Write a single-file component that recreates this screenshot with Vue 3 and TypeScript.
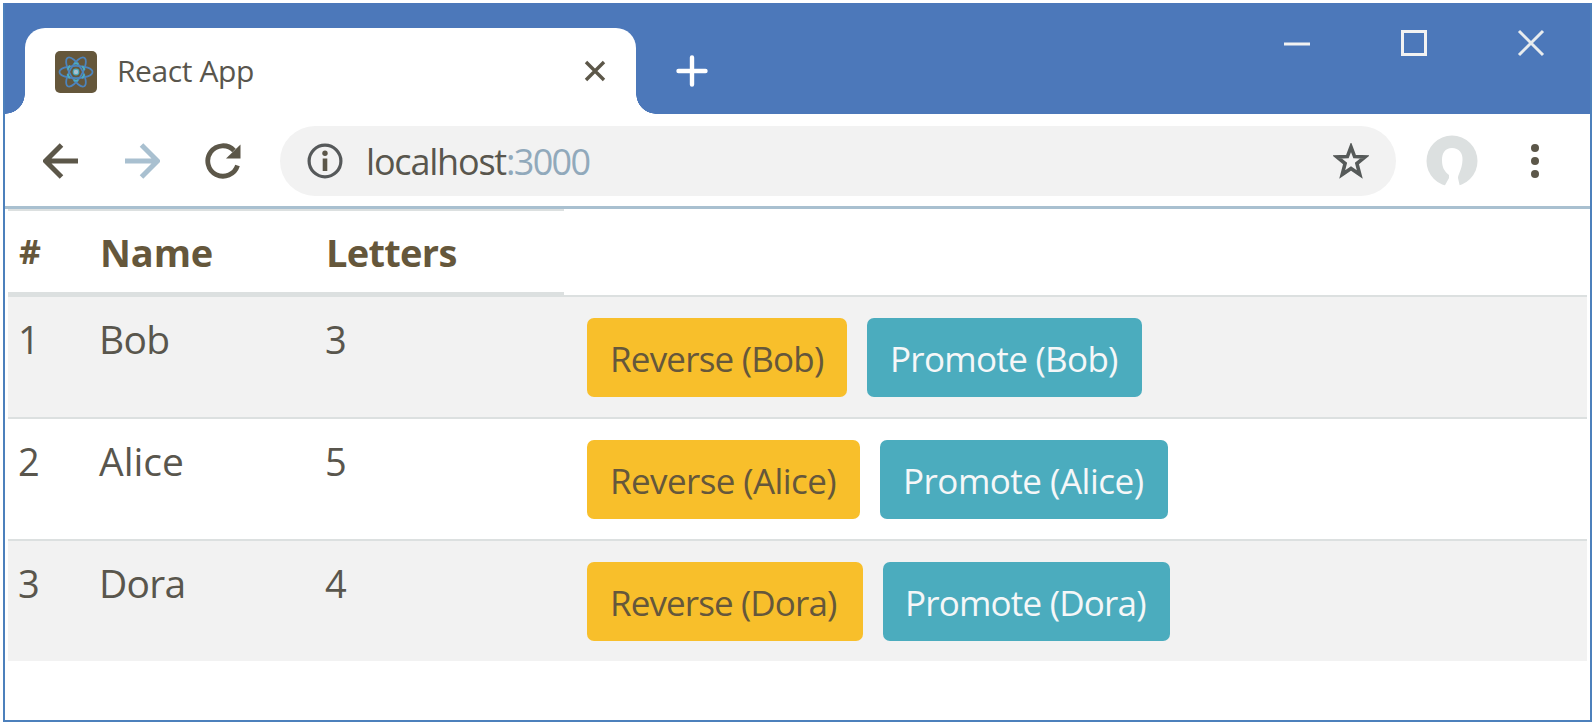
<script setup lang="ts">
interface Row {
  id: number
  name: string
}

const rows: Row[] = [
  { id: 1, name: 'Bob' },
  { id: 2, name: 'Alice' },
  { id: 3, name: 'Dora' },
]
</script>

<template>
  <div class="window">
    <header class="titlebar">
      <div class="tab">
        <svg class="favicon" viewBox="0 0 42 42">
          <rect width="42" height="42" rx="5" fill="#65573b" />
          <g fill="none" stroke="#4c84bd" stroke-width="1.8">
            <ellipse cx="21" cy="21" rx="16.5" ry="6.2" />
            <ellipse cx="21" cy="21" rx="16.5" ry="6.2" transform="rotate(60 21 21)" />
            <ellipse cx="21" cy="21" rx="16.5" ry="6.2" transform="rotate(120 21 21)" />
          </g>
          <circle cx="21" cy="21" r="8.6" fill="none" stroke="#4bacbe" stroke-width="2" stroke-dasharray="4.5 4.505" stroke-dashoffset="-2.25" />
          <circle cx="21" cy="21" r="2.8" fill="#a9c0d0" stroke="#4bacbe" stroke-width="1.2" />
        </svg>
        <span class="tab-title">React App</span>
        <svg class="tab-close" viewBox="0 0 22 22">
          <path d="M2 2L20 20M20 2L2 20" stroke="#5c5749" stroke-width="3.4" />
        </svg>
      </div>
      <svg class="new-tab" viewBox="0 0 32 32">
        <path d="M16 2.5V29.5M2.5 16H29.5" stroke="#fff" stroke-width="4.4" stroke-linecap="round" />
      </svg>
      <div class="controls">
        <svg viewBox="0 0 28 28"><path d="M1 15H27" stroke="#f2f2f2" stroke-width="3" /></svg>
        <svg viewBox="0 0 28 28"><rect x="2.5" y="2.5" width="23" height="23" fill="none" stroke="#f2f2f2" stroke-width="3" /></svg>
        <svg viewBox="0 0 28 28"><path d="M2 2L26 26M26 2L2 26" stroke="#e8ecee" stroke-width="3" /></svg>
      </div>
    </header>

    <nav class="toolbar">
      <svg class="nav-icon back" viewBox="0 0 36 36">
        <path d="M35 18H4M18.5 2L2.5 18L18.5 34" fill="none" stroke="#5c5749" stroke-width="5" />
      </svg>
      <svg class="nav-icon forward" viewBox="0 0 36 36">
        <path d="M1 18H32M17.5 2L33.5 18L17.5 34" fill="none" stroke="#a9c0d0" stroke-width="5" />
      </svg>
      <svg class="nav-icon reload" viewBox="0 0 36 36">
        <path d="M32.5 22.5A15.2 15.2 0 1 1 29 7.5" fill="none" stroke="#5c5749" stroke-width="4.8" />
        <path d="M35.5 1.5V15.5H21Z" fill="#5c5749" />
      </svg>
      <div class="address">
        <svg class="info" viewBox="0 0 36 36">
          <circle cx="18" cy="18" r="15.9" fill="none" stroke="#56595a" stroke-width="3.2" />
          <circle cx="18" cy="10.3" r="2.7" fill="#5c5749" />
          <path d="M18 15.5V28" stroke="#5c5749" stroke-width="4.6" />
        </svg>
        <span class="url"><span class="host">localhost</span><span class="port">:3000</span></span>
        <svg class="star" viewBox="0 0 36 36">
          <path d="M18 4L21.6 13.6L32 14L23.9 20.5L26.8 31.5L18 25.5L9.2 31.5L12.1 20.5L4 14L14.4 13.6Z" fill="none" stroke="#565a59" stroke-width="3.6" />
        </svg>
      </div>
      <svg class="avatar" viewBox="0 0 52 52">
        <circle cx="26" cy="26" r="25.5" fill="#dce0e0" />
        <path d="M26 13C19 13 16 18 16 25C16 32 18 36 23 40V43L18 52H34L32 43C32 39 36 35 36.5 25C37 18 33 13 26 13Z" fill="#fff" />
      </svg>
      <svg class="menu" viewBox="0 0 10 36">
        <circle cx="5" cy="5" r="4" fill="#5c5749" />
        <circle cx="5" cy="18" r="4" fill="#5c5749" />
        <circle cx="5" cy="31" r="4" fill="#5c5749" />
      </svg>
    </nav>

    <main class="page">
      <table>
        <colgroup>
          <col class="c-id"><col class="c-name"><col class="c-len"><col>
        </colgroup>
        <thead>
          <tr><th class="hash">#</th><th class="name">Name</th><th>Letters</th></tr>
        </thead>
        <tbody>
          <tr v-for="row in rows" :key="row.id" :class="row.name.toLowerCase()">
            <td class="number">{{ row.id }}</td>
            <td class="person">{{ row.name }}</td>
            <td class="number">{{ row.name.length }}</td>
            <td>
              <div class="actions">
                <button class="reverse">Reverse ({{ row.name }})</button>
                <button class="promote">Promote ({{ row.name }})</button>
              </div>
            </td>
          </tr>
        </tbody>
      </table>
    </main>
  </div>
</template>

<style>
body {
  margin: 0;
  background: #fff;
  overflow: hidden;
}
</style>

<style scoped>
.window {
  box-sizing: border-box;
  width: 1589px;
  height: 719px;
  margin: 3px;
  border: 2px solid #4c80bc;
  border-top: 0;
  background: #fff;
  color: #59564d;
  font-family: "Open Sans", "Noto Sans", sans-serif;
}
svg {
  display: block;
  flex: none;
}
.titlebar {
  display: flex;
  height: 111px;
  background: #4c78ba;
}
.tab {
  position: relative;
  display: flex;
  align-items: center;
  box-sizing: border-box;
  width: 611px;
  height: 86px;
  margin: 25px 0 0 20px;
  padding: 0 30px;
  border-radius: 20px 20px 0 0;
  background: #fff;
}
.tab::before,
.tab::after {
  content: "";
  position: absolute;
  bottom: 0;
  width: 20px;
  height: 20px;
}
.tab::before {
  left: -20px;
  background: radial-gradient(circle at 0 0, transparent 19.5px, #fff 20px);
}
.tab::after {
  right: -20px;
  background: radial-gradient(circle at 100% 0, transparent 19.5px, #fff 20px);
}
.favicon {
  width: 42px;
  height: 42px;
  margin-top: 1px;
}
.tab-title {
  margin-left: 20px;
  font-size: 30px;
  line-height: 40px;
  letter-spacing: -0.4px;
}
.tab-close {
  width: 22px;
  height: 22px;
  margin-left: auto;
}
.new-tab {
  width: 32px;
  height: 32px;
  margin: 52px 0 0 40px;
}
.controls {
  display: flex;
  gap: 89px;
  margin: 26px 45px 0 auto;
}
.controls svg {
  width: 28px;
  height: 28px;
}
.toolbar {
  display: flex;
  align-items: center;
  box-sizing: border-box;
  height: 95px;
  padding: 1px 50px 0 38px;
  border-bottom: 3px solid #a9c0d0;
}
.nav-icon {
  width: 36px;
  height: 36px;
}
.forward,
.reload {
  margin-left: 45px;
}
.address {
  display: flex;
  align-items: center;
  box-sizing: border-box;
  width: 1116px;
  height: 70px;
  margin-left: 39px;
  padding: 0 27px;
  border-radius: 35px;
  background: #f2f2f2;
}
.info,
.star {
  width: 36px;
  height: 36px;
}
.url {
  margin: 2px 0 0 23px;
  font-size: 36px;
  line-height: 48px;
}
.host {
  font-weight: 500;
  letter-spacing: -1.2px;
}
.port {
  color: #91a9bb;
  letter-spacing: -1.7px;
}
.star {
  margin-left: auto;
}
.avatar {
  width: 52px;
  height: 52px;
  margin-left: 30px;
}
.menu {
  width: 10px;
  height: 36px;
  margin-left: auto;
}
.page {
  padding: 0 3px;
}
table {
  width: 100%;
  table-layout: fixed;
  border-collapse: separate;
  border-spacing: 0;
}
.c-id {
  width: 80px;
}
.c-name {
  width: 226px;
}
.c-len {
  width: 250px;
}
th,
td {
  box-sizing: border-box;
  padding: 0 0 0 12px;
  text-align: left;
  vertical-align: top;
}
th {
  height: 86px;
  padding-top: 16px;
  border-top: 2px solid #dce0e0;
  border-bottom: 3px solid #dce0e0;
  color: #65573b;
  font-size: 38px;
  line-height: 50px;
  letter-spacing: -0.7px;
}
th.name {
  letter-spacing: -0.1px;
}
th.hash {
  padding-left: 11px;
  font-size: 34px;
  line-height: 48px;
}
td {
  height: 122px;
  padding-top: 17px;
  border-top: 2px solid #dce0e0;
  font-size: 39px;
  line-height: 50px;
}
.number {
  padding-left: 11px;
  font-size: 38px;
}
.number:first-child {
  padding-left: 10px;
}
.person {
  padding-left: 11px;
  letter-spacing: -0.7px;
}
.alice .person {
  letter-spacing: 0;
}
tbody tr:nth-child(odd) {
  background: #f2f2f2;
}
.actions {
  display: flex;
  gap: 20px;
  margin: 4px 0 0 11px;
}
button {
  box-sizing: border-box;
  height: 79px;
  padding: 2px 0 0 23px;
  border: 0;
  border-radius: 7px;
  font-family: inherit;
  font-size: 35px;
  letter-spacing: -0.7px;
  text-align: left;
  white-space: nowrap;
}
.reverse {
  width: 260px;
  background: #f8bf2b;
  color: #65573b;
  letter-spacing: -0.8px;
}
.promote {
  width: 275px;
  background: #4bacbe;
  color: #f5f7f8;
}
.alice .reverse {
  width: 273px;
  letter-spacing: -0.6px;
}
.alice .promote {
  width: 288px;
  letter-spacing: -0.5px;
}
.dora .reverse {
  width: 276px;
  letter-spacing: -0.9px;
}
.dora .promote {
  width: 287px;
  padding-left: 22px;
  letter-spacing: -0.8px;
}
</style>
